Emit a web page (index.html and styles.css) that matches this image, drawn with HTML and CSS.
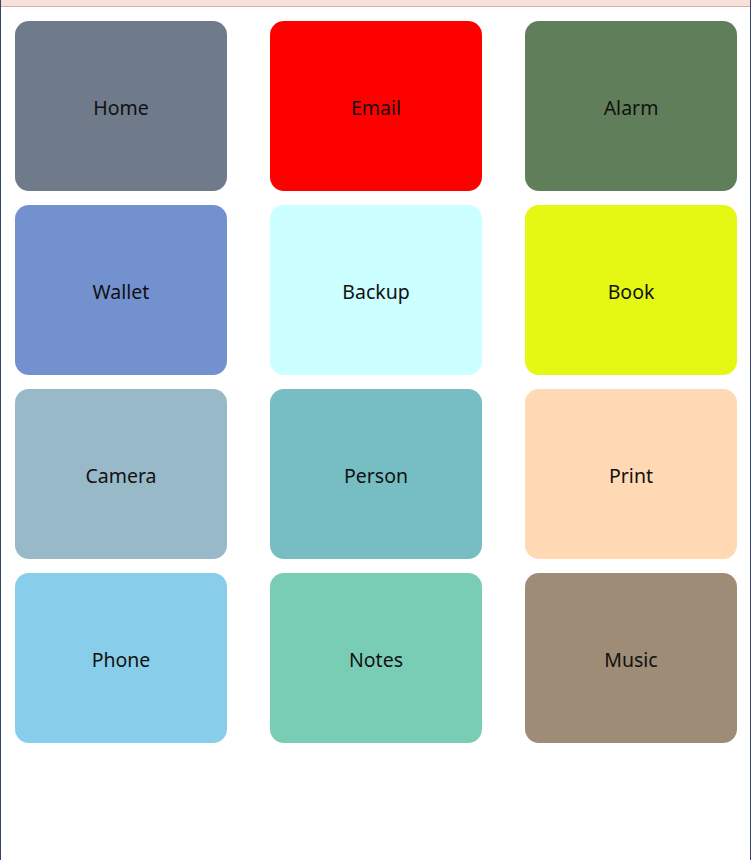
FILE: index.html
```html
<!DOCTYPE html>
<html>
<head>
<meta charset="utf-8">
<link rel="stylesheet" href="styles.css">
</head>
<body>
<div class="frame">
  <div class="topbar"></div>
  <div class="grid">
    <div class="tile c-home">Home</div>
    <div class="tile c-email">Email</div>
    <div class="tile c-alarm">Alarm</div>
    <div class="tile c-wallet">Wallet</div>
    <div class="tile c-backup">Backup</div>
    <div class="tile c-book">Book</div>
    <div class="tile c-camera">Camera</div>
    <div class="tile c-person">Person</div>
    <div class="tile c-print">Print</div>
    <div class="tile c-phone">Phone</div>
    <div class="tile c-notes">Notes</div>
    <div class="tile c-music">Music</div>
  </div>
</div>
</body>
</html>
```
FILE: styles.css
```css
html, body {
  margin: 0;
  padding: 0;
  background: #ffffff;
}
.frame {
  width: 752px;
  height: 860px;
  box-sizing: border-box;
  border-left: 1px solid #34466a;
  border-right: 1px solid #34466a;
  border-right-width: 1px;
  margin-right: 1px;
  width: 751px;
  background: #ffffff;
  overflow: hidden;
}
.topbar {
  height: 6px;
  background: #f8e1da;
  border-bottom: 1px solid #cdb3ab;
}
.grid {
  display: grid;
  grid-template-columns: repeat(3, 212px);
  grid-auto-rows: 170px;
  column-gap: 43px;
  row-gap: 14px;
  padding: 14px 0 0 14px;
}
.tile {
  border-radius: 14px;
  display: flex;
  align-items: center;
  justify-content: center;
  font-family: "Noto Sans", "Open Sans", sans-serif;
  font-size: 19.5px;
  color: #111111;
  padding-top: 2px;
  box-sizing: border-box;
}
.c-home { background: #6f7b8b; }
.c-email { background: #ff0000; }
.c-alarm { background: #617e5b; }
.c-wallet { background: #7390cf; }
.c-backup { background: #ccffff; }
.c-book { background: #e4f814; }
.c-camera { background: #98b9c8; }
.c-person { background: #76bec4; }
.c-print { background: #ffd9b3; }
.c-phone { background: #88ceea; }
.c-notes { background: #7acdb5; }
.c-music { background: #9f8c77; }
```
